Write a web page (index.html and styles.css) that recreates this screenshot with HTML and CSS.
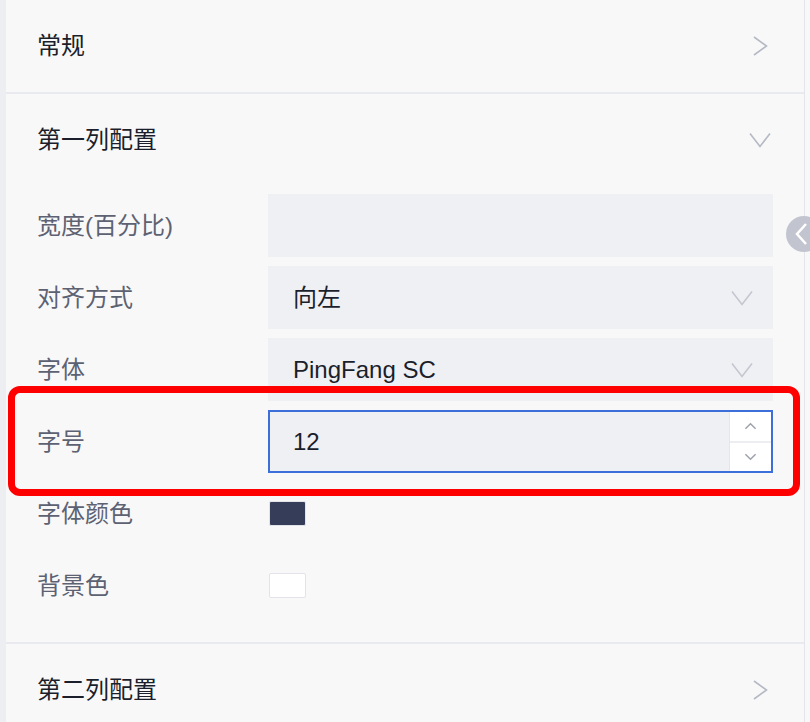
FILE: index.html
```html
<!DOCTYPE html>
<html lang="zh-CN">
<head>
  <meta charset="UTF-8" />
  <title>表格配置</title>
  <link rel="stylesheet" href="styles.css">
</head>
<body>
  <div class="panel">
    <section class="group">
      <div class="group-head">
        <span>常规</span>
        <svg class="arrow" viewBox="0 0 24 24"><path d="M6 3 L18.5 12 L6 21" /></svg>
      </div>
    </section>

    <section class="group">
      <div class="group-head">
        <span>第一列配置</span>
        <svg class="arrow" viewBox="0 0 24 24"><path d="M2 5.5 L12 18.5 L22 5.5" /></svg>
      </div>
      <div class="group-body">
        <div class="field">
          <label>宽度(百分比)</label>
          <div class="input"></div>
        </div>
        <div class="field">
          <label>对齐方式</label>
          <div class="input select">
            <span>向左</span>
            <svg class="arrow light" viewBox="0 0 24 24"><path d="M2 5.5 L12 18.5 L22 5.5" /></svg>
          </div>
        </div>
        <div class="field">
          <label>字体</label>
          <div class="input select">
            <span>PingFang SC</span>
            <svg class="arrow light" viewBox="0 0 24 24"><path d="M2 5.5 L12 18.5 L22 5.5" /></svg>
          </div>
        </div>
        <div class="field">
          <label>字号</label>
          <div class="input number focused">
            <span>12</span>
            <div class="spinner">
              <div class="spin"><svg viewBox="0 0 14 8"><path d="M1.5 7 L7 1.5 L12.5 7" /></svg></div>
              <div class="spin"><svg viewBox="0 0 14 8"><path d="M1.5 1 L7 6.5 L12.5 1" /></svg></div>
            </div>
          </div>
        </div>
        <div class="field">
          <label>字体颜色</label>
          <span class="swatch" style="background-color: #353d58;"></span>
        </div>
        <div class="field">
          <label>背景色</label>
          <span class="swatch" style="background-color: #ffffff;"></span>
        </div>
      </div>
    </section>

    <section class="group">
      <div class="group-head">
        <span>第二列配置</span>
        <svg class="arrow" viewBox="0 0 24 24"><path d="M6 3 L18.5 12 L6 21" /></svg>
      </div>
    </section>
  </div>

  <!-- repère rouge autour du champ -->
  <div class="highlight"></div>

  <div class="collapse-btn">
    <svg viewBox="0 0 36 36"><path d="M20 8 L11 18 L20 28" /></svg>
  </div>
</body>
</html>
```

FILE: styles.css
```css
:root {
  --panel-bg: #f8f8f9;
  --strip: #eceef2;
  --line: #e8eaef;
  --input-bg: #eff0f4;
  --title: #1b1f2b;
  --label: #5d6272;
  --arrow: #b5b9c3;
  --arrow-light: #c4c7cf;
  --focus: #3d6fdb;
}

* {
  margin: 0;
  padding: 0;
  box-sizing: border-box;
}

body {
  width: 810px;
  height: 722px;
  overflow: hidden;
  position: relative;
  background-color: var(--panel-bg);
  font-family: "Liberation Sans", "Noto Sans CJK SC", sans-serif;
  font-size: 24px;
}

.panel {
  width: 805px;
  height: 722px;
  background-color: var(--panel-bg);
  border-left: 6px solid var(--strip);
  border-right: 1px solid #e3e5ea;
}

.group {
  border-bottom: 2px solid var(--line);
}

.group:last-child {
  border-bottom: none;
}

.group-head {
  height: 92px;
  padding: 0 32px 0 31px;
  display: flex;
  align-items: center;
  justify-content: space-between;
  color: var(--title);
  line-height: 1;
}

.arrow {
  width: 24px;
  height: 24px;
  fill: none;
  stroke: var(--arrow);
  stroke-width: 1.6;
}

.arrow.light {
  stroke: var(--arrow-light);
}

.group-body {
  padding: 8px 31px 25px 31px;
  display: flex;
  flex-direction: column;
  gap: 9px;
}

.field {
  height: 63px;
  display: grid;
  grid-template-columns: 231px 505px;
  align-items: center;
}

.field label {
  color: var(--label);
  line-height: 1;
}

.input {
  height: 63px;
  background-color: var(--input-bg);
  padding: 0 19px 0 25px;
  display: flex;
  align-items: center;
  justify-content: space-between;
  color: var(--title);
  line-height: 1;
}

.input.focused {
  border: 2px solid var(--focus);
  padding: 0 0 0 23px;
  align-items: stretch;
}

.input.focused span {
  align-self: center;
}

.spinner {
  width: 42px;
  display: flex;
  flex-direction: column;
  background-color: #ffffff;
  border-left: 1px solid #e4e6eb;
}

.spin {
  flex: 1;
  display: flex;
  align-items: center;
  justify-content: center;
}

.spin + .spin {
  border-top: 2px solid #eceef2;
}

.spin svg {
  width: 13px;
  height: 8px;
  fill: none;
  stroke: #9ea2ac;
  stroke-width: 1.6;
}

.swatch {
  width: 37px;
  height: 25px;
  border: 1px solid #e2e4ea;
  border-radius: 2px;
  margin-left: 1px;
}

.highlight {
  position: absolute;
  left: 8px;
  top: 386px;
  width: 792px;
  height: 110px;
  border: 7px solid #ff0000;
  border-radius: 12px;
}

.collapse-btn {
  position: absolute;
  left: 786px;
  top: 216px;
  width: 36px;
  height: 36px;
  border-radius: 50%;
  background-color: #c2c5cf;
}

.collapse-btn svg {
  width: 36px;
  height: 36px;
  fill: none;
  stroke: #ffffff;
  stroke-width: 2.5;
}
```
